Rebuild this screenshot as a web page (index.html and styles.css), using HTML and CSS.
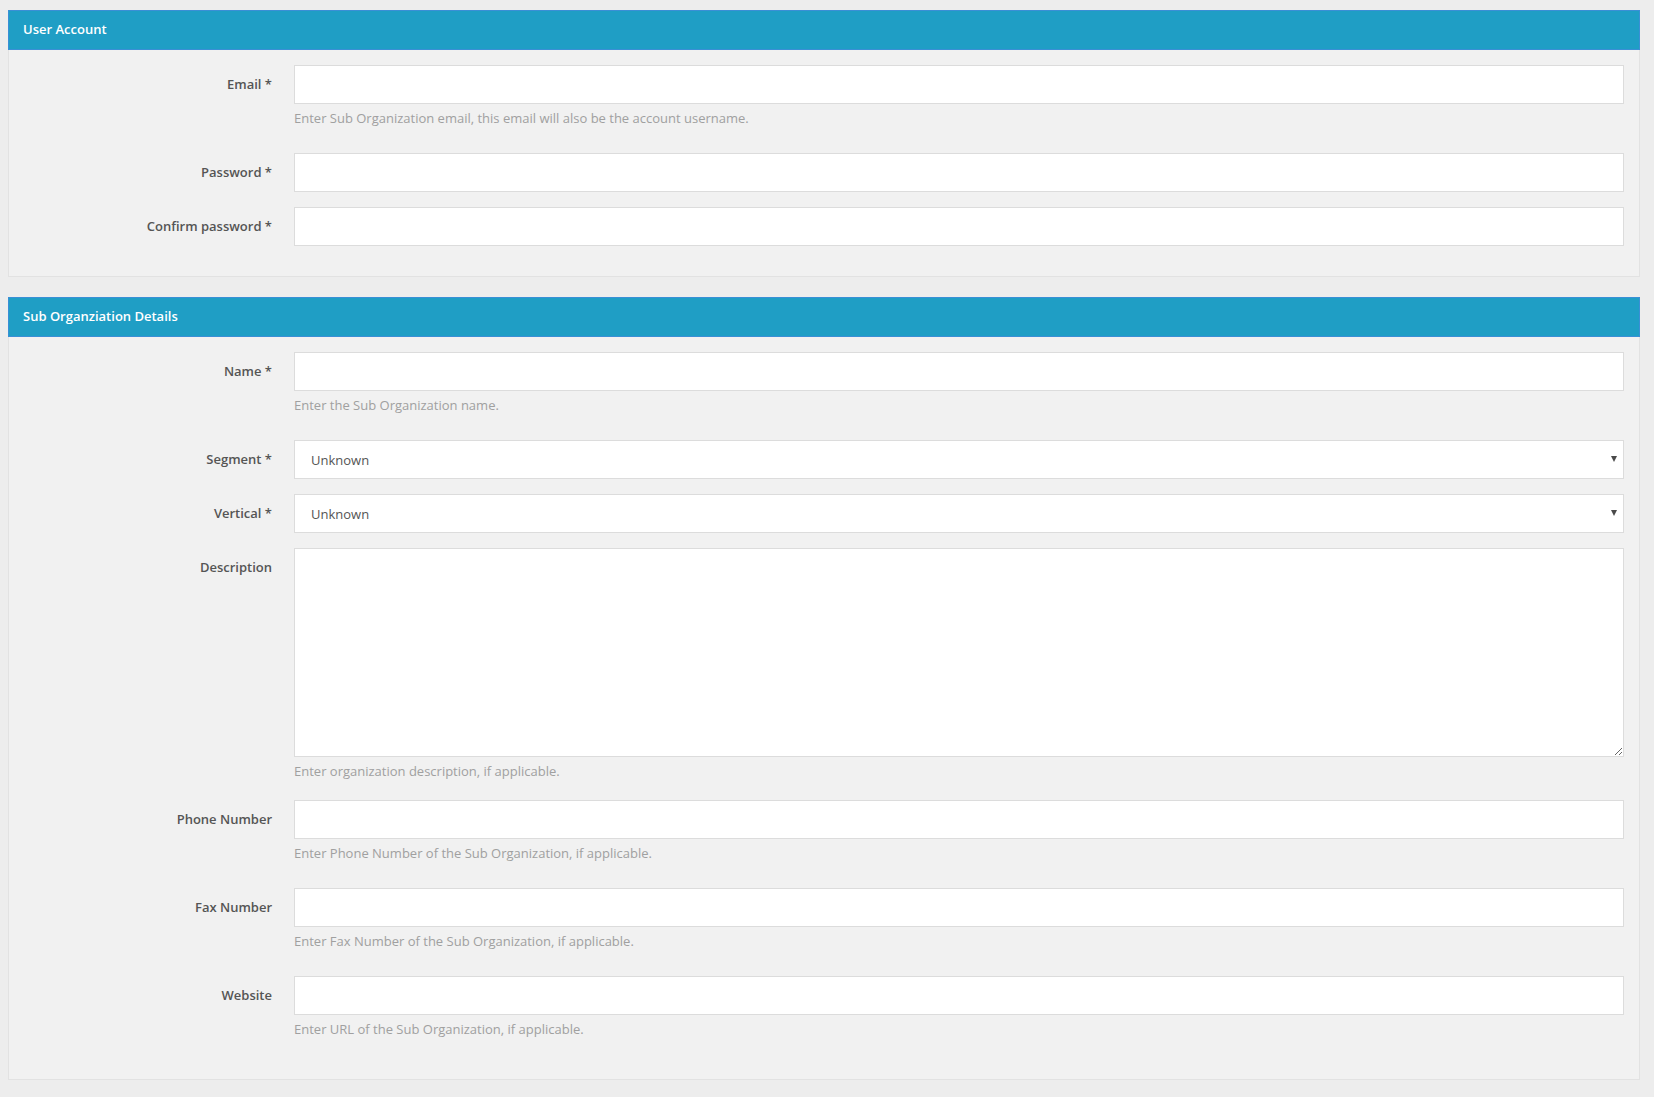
FILE: index.html
```html
<!DOCTYPE html>
<html lang="en">
<head>
<meta charset="utf-8">
<title>Sub Organization</title>
<link rel="stylesheet" href="styles.css">
</head>
<body>
<form class="page">
  <section class="panel">
    <div class="panel-heading">User Account</div>
    <div class="panel-body">
      <div class="form-group">
        <label class="control-label">Email *</label>
        <div class="control">
          <input class="form-control" type="text">
          <p class="help-block">Enter Sub Organization email, this email will also be the account username.</p>
        </div>
      </div>
      <div class="form-group">
        <label class="control-label">Password *</label>
        <div class="control">
          <input class="form-control" type="password">
        </div>
      </div>
      <div class="form-group">
        <label class="control-label">Confirm password *</label>
        <div class="control">
          <input class="form-control" type="password">
        </div>
      </div>
    </div>
  </section>

  <section class="panel">
    <div class="panel-heading">Sub Organziation Details</div>
    <div class="panel-body">
      <div class="form-group">
        <label class="control-label">Name *</label>
        <div class="control">
          <input class="form-control" type="text">
          <p class="help-block">Enter the Sub Organization name.</p>
        </div>
      </div>
      <div class="form-group">
        <label class="control-label">Segment *</label>
        <div class="control select-wrap">
          <select class="form-control select"><option>Unknown</option></select>
          <span class="caret"></span>
        </div>
      </div>
      <div class="form-group">
        <label class="control-label">Vertical *</label>
        <div class="control select-wrap">
          <select class="form-control select"><option>Unknown</option></select>
          <span class="caret"></span>
        </div>
      </div>
      <div class="form-group">
        <label class="control-label">Description</label>
        <div class="control">
          <textarea class="form-control textarea"></textarea>
          <p class="help-block help-tight">Enter organization description, if applicable.</p>
        </div>
      </div>
      <div class="form-group">
        <label class="control-label">Phone Number</label>
        <div class="control">
          <input class="form-control" type="text">
          <p class="help-block">Enter Phone Number of the Sub Organization, if applicable.</p>
        </div>
      </div>
      <div class="form-group">
        <label class="control-label">Fax Number</label>
        <div class="control">
          <input class="form-control" type="text">
          <p class="help-block">Enter Fax Number of the Sub Organization, if applicable.</p>
        </div>
      </div>
      <div class="form-group">
        <label class="control-label">Website</label>
        <div class="control">
          <input class="form-control" type="text">
          <p class="help-block">Enter URL of the Sub Organization, if applicable.</p>
        </div>
      </div>
    </div>
  </section>
</form>
</body>
</html>
```

FILE: styles.css
```css
* { box-sizing: border-box; }

html, body {
  margin: 0;
  padding: 0;
}

body {
  background: #ededed;
  font-family: "Open Sans", "Noto Sans", sans-serif;
  font-size: 13px;
  color: #555;
  padding: 10px 14px 0 8px;
}

.page {
  display: flex;
  flex-direction: column;
  gap: 20px;
}

.panel {
  display: flex;
  flex-direction: column;
}

.panel-heading {
  height: 40px;
  background: #1f9ec5;
  border: 1px solid #3a8fd6;
  color: #fff;
  font-weight: 600;
  font-size: 13px;
  line-height: 36px;
  padding-left: 14px;
}

.panel-body {
  background: #f1f1f1;
  border: 1px solid #e2e2e2;
  border-top: 0;
  padding: 15px 15px 15px 0;
  display: flex;
  flex-direction: column;
}

.form-group {
  display: flex;
  align-items: flex-start;
  margin-bottom: 15px;
}

.control-label {
  width: 263px;
  flex: none;
  text-align: right;
  font-weight: 600;
  font-size: 13px;
  color: #555;
  line-height: 19px;
  padding-top: 10px;
}

.control {
  flex: 1;
  margin-left: 22px;
  min-width: 0;
}

.form-control {
  display: block;
  width: 100%;
  height: 39px;
  border: 1px solid #dcdcdc;
  background: #fff;
  border-radius: 0;
  font-family: "Open Sans", "Noto Sans", sans-serif;
  font-size: 13px;
  color: #555;
  margin: 0;
  outline: none;
}

.select {
  appearance: none;
  -webkit-appearance: none;
  padding: 0 30px 0 16px;
}

.select-wrap {
  position: relative;
}

.caret {
  position: absolute;
  right: 7px;
  top: 16px;
  width: 0;
  height: 0;
  border-left: 3px solid transparent;
  border-right: 3px solid transparent;
  border-top: 6px solid #4a4a4a;
}

.textarea {
  height: 209px;
  resize: both;
  padding: 6px 12px;
}

.help-block {
  margin: 5px 0 10px;
  font-size: 13px;
  line-height: 19px;
  color: #a0a0a0;
}

.help-tight {
  margin-bottom: 4px;
}
```
